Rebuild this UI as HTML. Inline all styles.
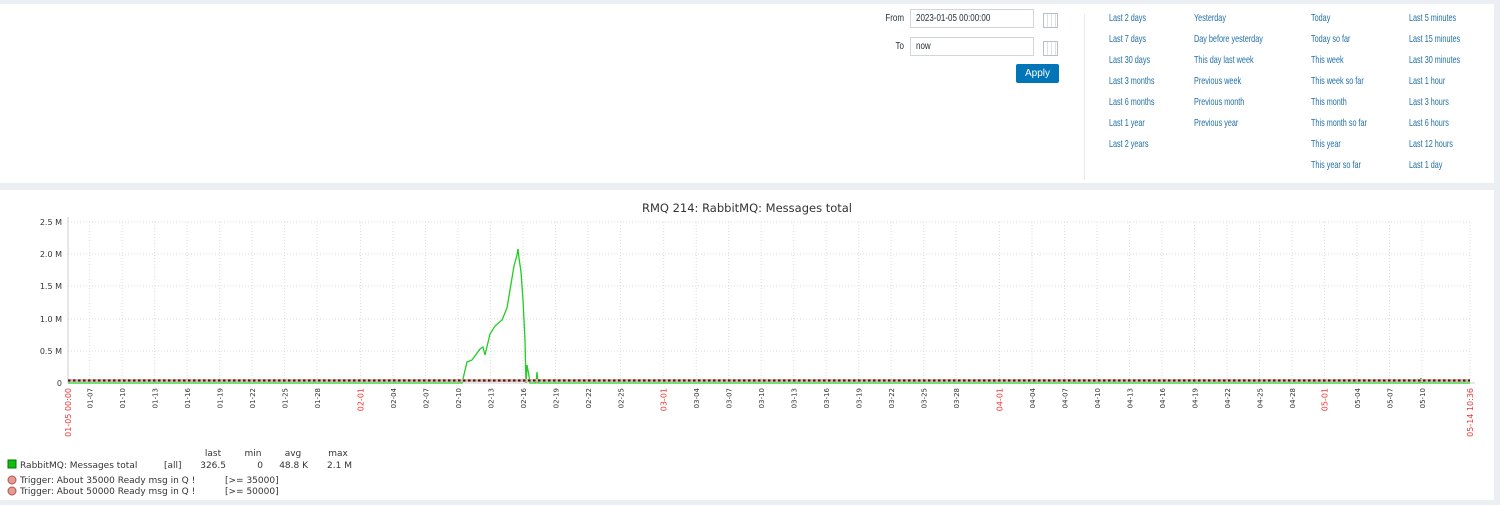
<!DOCTYPE html>
<html><head><meta charset="utf-8"><style>
html,body{margin:0;padding:0;width:1500px;height:504px;overflow:hidden;background:#ebeef2;font-family:"Liberation Sans",Arial,sans-serif;}
.top{position:absolute;left:0;top:4px;width:1494px;height:179px;background:#fff;}
.lbl{position:absolute;font-size:10px;color:#1f2c33;text-align:right;width:40px;transform:scaleX(.8);transform-origin:right}
.inp{position:absolute;width:124px;border:1px solid #cfd5d9;font-size:10px;color:#1f2c33;line-height:17px;padding-left:5px;box-sizing:border-box;height:19px}
.inp span{display:inline-block;transform:scaleX(.8);transform-origin:left}
.cal{position:absolute;width:13px;height:13px;border:1px solid #b7c0c6;background:repeating-linear-gradient(90deg,#fff 0 3px,#dde2e5 3px 4px);}
.btn{position:absolute;left:1016px;top:60px;width:43px;height:19px;background:#0275b8;color:#fff;font-size:10px;line-height:19px;text-align:center;border-radius:2px}
.sep{position:absolute;left:1084px;top:10px;width:1px;height:166px;background:#e6e9eb}
.lk{position:absolute;font-size:10.5px;color:#1f6ea8;white-space:nowrap;transform:scaleX(.69);transform-origin:left}
.chart{position:absolute;left:0;top:190px;width:1494px;height:310px;background:#fff;}
</style></head><body>
<div class="top">
<div class="lbl" style="left:864px;top:9px">From</div>
<div class="inp" style="left:910px;top:5px"><span>2023-01-05 00:00:00</span></div>
<div class="cal" style="left:1043px;top:9px"></div>
<div class="lbl" style="left:864px;top:37px">To</div>
<div class="inp" style="left:910px;top:33px"><span>now</span></div>
<div class="cal" style="left:1043px;top:37px"></div>
<div class="btn">Apply</div>
<div class="sep"></div>
<div id="links"></div>
</div>
<div class="chart"><svg id="g" width="1494" height="310" xmlns="http://www.w3.org/2000/svg" font-family="DejaVu Sans, sans-serif"></svg></div>
<script>
var cols=[[1109,["Last 2 days","Last 7 days","Last 30 days","Last 3 months","Last 6 months","Last 1 year","Last 2 years"]],
[1194,["Yesterday","Day before yesterday","This day last week","Previous week","Previous month","Previous year"]],
[1311,["Today","Today so far","This week","This week so far","This month","This month so far","This year","This year so far"]],
[1409,["Last 5 minutes","Last 15 minutes","Last 30 minutes","Last 1 hour","Last 3 hours","Last 6 hours","Last 12 hours","Last 1 day"]]];
var h="";cols.forEach(function(c){c[1].forEach(function(t,i){h+='<div class="lk" style="left:'+c[0]+'px;top:'+(8+i*21)+'px">'+t+'</div>';});});
document.getElementById('links').innerHTML=h;
var s="",o=190,x0=68,x1=1470,pd=(x1-x0)/129.44;
var ys=[[222,"2.5 M"],[254,"2.0 M"],[286,"1.5 M"],[319,"1.0 M"],[351,"0.5 M"],[383,"0"]];
ys.forEach(function(y){var yy=y[0]-o;if(y[1]!="0")s+='<line x1="'+x0+'" x2="'+x1+'" y1="'+yy+'" y2="'+yy+'" stroke="#ddd" stroke-dasharray="1,2"/>';
s+='<text x="62" y="'+(yy+3)+'" font-size="8" fill="#333" text-anchor="end">'+y[1]+'</text>';});
var md=[0,31,59,90,120];
for(var m=0;m<5;m++){for(var dd=1;dd<=28;dd+=3){if(m==1&&dd==28)continue;var d=md[m]+dd-1-4;if(d<=0||d>126)continue;
var x=x0+d*pd;var red=(dd==1);var l=("0"+(m+1))+"-"+(dd<10?"0"+dd:dd);
s+='<line x1="'+x+'" x2="'+x+'" y1="32" y2="193" stroke="#ddd" stroke-dasharray="1,2"/>';
s+='<text transform="translate('+(x+3)+',198) rotate(-90)" font-size="'+(red?8:7)+'" fill="'+(red?'#e33':'#333')+'" text-anchor="end">'+l+'</text>';}}
s+='<text transform="translate('+(x0+3)+',198) rotate(-90)" font-size="8" fill="#e33" text-anchor="end">01-05 00:00</text>';
s+='<text transform="translate('+(x1+3)+',198) rotate(-90)" font-size="8" fill="#e33" text-anchor="end">05-14 10:36</text>';
s+='<line x1="'+x1+'" x2="'+x1+'" y1="32" y2="193" stroke="#ddd" stroke-dasharray="1,2"/>';
s+='<line x1="'+x0+'" x2="'+x0+'" y1="27" y2="193" stroke="#ccc"/>';
s+='<line x1="'+x0+'" x2="'+(x1+5)+'" y1="193" y2="193" stroke="#ccc"/>';
var p=[[x0,383],[462,383],[467,362],[472,360],[480,349],[483,347],[485,355],[490,334],[495,326],[502,320],[507,308],[510,290],[512,278],[514,266],[517,255],[518,249],[519,258],[521,272],[523,300],[525,340],[526,383],[527,365],[529,376],[530,383],[536,383],[537,372],[538,383],[1420,383],[1421,378],[1422,383],[x1,383]];
s+='<polyline fill="none" stroke="#22cc22" stroke-width="1.3" points="'+p.map(function(q){return q[0]+","+(q[1]-o);}).join(" ")+'"/>';
s+='<rect x="'+x0+'" y="189" width="'+(x1-x0)+'" height="3" fill="#f0b0a8"/>';
s+='<line x1="'+x0+'" x2="'+x1+'" y1="190.5" y2="190.5" stroke="#222" stroke-width="2" stroke-dasharray="2.5,2.5"/>';
s+='<text x="747" y="22" font-size="11.5" fill="#333" text-anchor="middle">RMQ 214: RabbitMQ: Messages total</text>';
var t='font-size="9" fill="#333"';
s+='<text x="213" y="266" '+t+' text-anchor="middle">last</text><text x="253" y="266" '+t+' text-anchor="middle">min</text><text x="293" y="266" '+t+' text-anchor="middle">avg</text><text x="338" y="266" '+t+' text-anchor="middle">max</text>';
s+='<rect x="8" y="270" width="8" height="8" fill="#11bb11" stroke="#070"/>';
s+='<text x="20" y="278" '+t+'>RabbitMQ: Messages total</text><text x="164" y="278" '+t+'>[all]</text><text x="226" y="278" '+t+' text-anchor="end">326.5</text><text x="263" y="278" '+t+' text-anchor="end">0</text><text x="308" y="278" '+t+' text-anchor="end">48.8 K</text><text x="352" y="278" '+t+' text-anchor="end">2.1 M</text>';
s+='<circle cx="12" cy="290" r="4" fill="#e89a90" stroke="#a55"/><text x="20" y="293" '+t+'>Trigger: About 35000 Ready msg in Q !</text><text x="225" y="293" '+t+'>[&gt;= 35000]</text>';
s+='<circle cx="12" cy="301" r="4" fill="#e89a90" stroke="#a55"/><text x="20" y="304" '+t+'>Trigger: About 50000 Ready msg in Q !</text><text x="225" y="304" '+t+'>[&gt;= 50000]</text>';
document.getElementById('g').innerHTML=s;
</script>
</body></html>
